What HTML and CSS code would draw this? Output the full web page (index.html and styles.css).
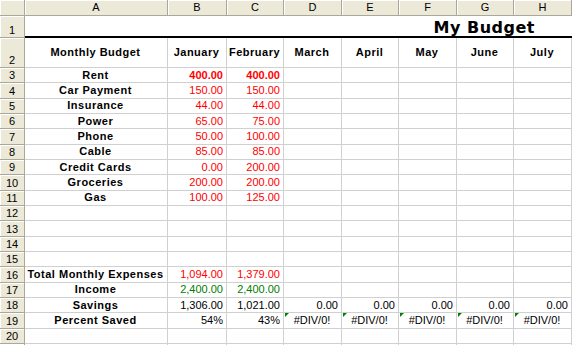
FILE: index.html
```html
<!DOCTYPE html>
<html>
<head>
<meta charset="utf-8">
<link rel="stylesheet" href="styles.css">
</head>
<body>
<div class="sheet">
  <div class="hd corner"></div>
  <div class="hd col">A</div><div class="hd col">B</div><div class="hd col">C</div><div class="hd col">D</div><div class="hd col">E</div><div class="hd col">F</div><div class="hd col">G</div><div class="hd col">H</div>

  <div class="hd rowh">1</div>
  <div class="title-cell"><span class="title">My Budget</span></div>

  <div class="hd rowh">2</div>
  <div class="c lbl">Monthly Budget</div>
  <div class="c mon">January</div><div class="c mon">February</div><div class="c mon">March</div><div class="c mon">April</div><div class="c mon">May</div><div class="c mon">June</div><div class="c mon">July</div>

  <div class="hd rowh">3</div>
  <div class="c lbl">Rent</div><div class="c num red b">400.00</div><div class="c num red b">400.00</div><div class="c"></div><div class="c"></div><div class="c"></div><div class="c"></div><div class="c"></div>

  <div class="hd rowh">4</div>
  <div class="c lbl">Car Payment</div><div class="c num red">150.00</div><div class="c num red">150.00</div><div class="c"></div><div class="c"></div><div class="c"></div><div class="c"></div><div class="c"></div>

  <div class="hd rowh">5</div>
  <div class="c lbl">Insurance</div><div class="c num red">44.00</div><div class="c num red">44.00</div><div class="c"></div><div class="c"></div><div class="c"></div><div class="c"></div><div class="c"></div>

  <div class="hd rowh">6</div>
  <div class="c lbl">Power</div><div class="c num red">65.00</div><div class="c num red">75.00</div><div class="c"></div><div class="c"></div><div class="c"></div><div class="c"></div><div class="c"></div>

  <div class="hd rowh">7</div>
  <div class="c lbl">Phone</div><div class="c num red">50.00</div><div class="c num red">100.00</div><div class="c"></div><div class="c"></div><div class="c"></div><div class="c"></div><div class="c"></div>

  <div class="hd rowh">8</div>
  <div class="c lbl">Cable</div><div class="c num red">85.00</div><div class="c num red">85.00</div><div class="c"></div><div class="c"></div><div class="c"></div><div class="c"></div><div class="c"></div>

  <div class="hd rowh">9</div>
  <div class="c lbl">Credit Cards</div><div class="c num red">0.00</div><div class="c num red">200.00</div><div class="c"></div><div class="c"></div><div class="c"></div><div class="c"></div><div class="c"></div>

  <div class="hd rowh">10</div>
  <div class="c lbl">Groceries</div><div class="c num red">200.00</div><div class="c num red">200.00</div><div class="c"></div><div class="c"></div><div class="c"></div><div class="c"></div><div class="c"></div>

  <div class="hd rowh">11</div>
  <div class="c lbl">Gas</div><div class="c num red">100.00</div><div class="c num red">125.00</div><div class="c"></div><div class="c"></div><div class="c"></div><div class="c"></div><div class="c"></div>

  <div class="hd rowh">12</div>
  <div class="c"></div><div class="c"></div><div class="c"></div><div class="c"></div><div class="c"></div><div class="c"></div><div class="c"></div><div class="c"></div>

  <div class="hd rowh">13</div>
  <div class="c"></div><div class="c"></div><div class="c"></div><div class="c"></div><div class="c"></div><div class="c"></div><div class="c"></div><div class="c"></div>

  <div class="hd rowh">14</div>
  <div class="c"></div><div class="c"></div><div class="c"></div><div class="c"></div><div class="c"></div><div class="c"></div><div class="c"></div><div class="c"></div>

  <div class="hd rowh">15</div>
  <div class="c"></div><div class="c"></div><div class="c"></div><div class="c"></div><div class="c"></div><div class="c"></div><div class="c"></div><div class="c"></div>

  <div class="hd rowh">16</div>
  <div class="c lbl">Total Monthly Expenses</div><div class="c num red">1,094.00</div><div class="c num red">1,379.00</div><div class="c"></div><div class="c"></div><div class="c"></div><div class="c"></div><div class="c"></div>

  <div class="hd rowh">17</div>
  <div class="c lbl">Income</div><div class="c num green">2,400.00</div><div class="c num green">2,400.00</div><div class="c"></div><div class="c"></div><div class="c"></div><div class="c"></div><div class="c"></div>

  <div class="hd rowh">18</div>
  <div class="c lbl">Savings</div><div class="c num">1,306.00</div><div class="c num">1,021.00</div><div class="c num">0.00</div><div class="c num">0.00</div><div class="c num">0.00</div><div class="c num">0.00</div><div class="c num">0.00</div>

  <div class="hd rowh">19</div>
  <div class="c lbl">Percent Saved</div><div class="c num">54%</div><div class="c num">43%</div><div class="c err">#DIV/0!</div><div class="c err">#DIV/0!</div><div class="c err">#DIV/0!</div><div class="c err">#DIV/0!</div><div class="c err">#DIV/0!</div>

  <div class="hd rowh">20</div>
  <div class="c"></div><div class="c"></div><div class="c"></div><div class="c"></div><div class="c"></div><div class="c"></div><div class="c"></div><div class="c"></div>

  <div class="hd rowh"></div>
  <div class="c"></div><div class="c"></div><div class="c"></div><div class="c"></div><div class="c"></div><div class="c"></div><div class="c"></div><div class="c"></div>
</div>
</body>
</html>
```

FILE: styles.css
```css
html, body {
  margin: 0;
  padding: 0;
  background: #ffffff;
  overflow: hidden;
}

.sheet {
  display: grid;
  grid-template-columns: 25px 143px 59px 57px 58px 57px 58px 57px 58px;
  grid-template-rows: 16px 22px 30px repeat(19, 15.33px);
  font-family: "Liberation Sans", Arial, sans-serif;
  font-size: 11px;
  color: #000;
}

.hd {
  box-sizing: border-box;
  background: #ECE9D8;
  border-right: 1px solid #ACA899;
  border-bottom: 1px solid #ACA899;
  box-shadow: inset 1px 1px 0 #ffffff;
  display: flex;
  justify-content: center;
  color: #000;
  line-height: 13px;
}

.col {
  align-items: center;
}

.rowh {
  align-items: flex-end;
  padding-bottom: 0;
}

.title-cell {
  grid-column: 2 / 10;
  box-sizing: border-box;
  border-bottom: 2px solid #000;
  display: flex;
  justify-content: flex-end;
  align-items: center;
  padding-right: 37px;
  padding-top: 2px;
}

.title {
  font-family: "DejaVu Sans", Verdana, sans-serif;
  font-weight: bold;
  font-size: 16px;
  letter-spacing: 0.5px;
}

.c {
  box-sizing: border-box;
  border-right: 1px solid #D0D0D0;
  border-bottom: 1px solid #D0D0D0;
  display: flex;
  align-items: center;
  padding: 0 3px 0 2px;
  white-space: nowrap;
  position: relative;
  line-height: 13px;
}

.lbl {
  justify-content: center;
  font-weight: bold;
  letter-spacing: 0.5px;
}

.mon {
  justify-content: center;
  font-weight: bold;
  letter-spacing: 0.5px;
}

.num {
  justify-content: flex-end;
}

.err {
  justify-content: center;
}

.err::before {
  content: "";
  position: absolute;
  left: 1px;
  top: 0;
  width: 0;
  height: 0;
  border-top: 4px solid #008000;
  border-right: 4px solid transparent;
}

.red { color: #FF0000; }
.green { color: #008000; }
.b { font-weight: bold; }
```
